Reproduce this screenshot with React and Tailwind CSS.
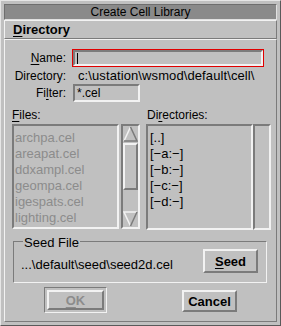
import React from "react";

// motif-ish bevels
const sunken = "border-2 border-t-[#7b7b7b] border-l-[#7b7b7b] border-b-[#f2f2f2] border-r-[#f2f2f2]";
const raised = "border-2 border-t-[#f2f2f2] border-l-[#f2f2f2] border-b-[#7b7b7b] border-r-[#7b7b7b]";
const etched = "border border-t-[#7b7b7b] border-l-[#7b7b7b] border-b-[#f2f2f2] border-r-[#f2f2f2]";

const files = ["archpa.cel", "areapat.cel", "ddxampl.cel", "geompa.cel", "igespats.cel", "lighting.cel"];
const dirs = ["[..]", "[\u2212a:\u2212]", "[\u2212b:\u2212]", "[\u2212c:\u2212]", "[\u2212d:\u2212]"];

function Mn({ children }) {
  return <span className="underline underline-offset-2 decoration-1">{children}</span>;
}

export default function App() {
  return (
    <div
      className="w-[281px] h-[326px] bg-[#c0c0c0] text-black text-[12px] leading-none p-[3px] border border-t-[#e6e6e6] border-l-[#e6e6e6] border-b-[#5a5a5a] border-r-[#5a5a5a] flex flex-col"
      style={{ fontFamily: '"Liberation Sans", Arial, sans-serif' }}
    >
      {/* title bar */}
      <div className="h-[16px] bg-[#8a8a8a] border border-t-[#6e6e6e] border-l-[#6e6e6e] border-b-[#e0e0e0] border-r-[#e0e0e0] flex items-center justify-center text-[12px]">
        Create Cell Library
      </div>

      {/* menu bar */}
      <div className={`h-[19px] ${raised} border-[1px] flex items-center pl-[8px] font-bold text-[13px]`}>
        <span><Mn>D</Mn>irectory</span>
      </div>

      {/* body */}
      <div className={`flex-1 ${raised} border-[1px] flex flex-col`}>
        {/* name */}
        <div className="flex items-center mt-[9px] h-[18px]">
          <div className="w-[61px] text-right"><Mn>N</Mn>ame:</div>
          <div className="ml-[6px] w-[192px] h-[18px] border border-[#e00000]">
            <div className={`h-full ${sunken} flex items-center pl-[2px]`}>
              <div className="w-[1px] h-[11px] bg-black"></div>
            </div>
          </div>
        </div>

        {/* directory */}
        <div className="flex items-center h-[17px]">
          <div className="w-[61px] text-right">Directory:</div>
          <div className="ml-[12px] text-[13px] tracking-[0.1px]">c:\ustation\wsmod\default\cell\</div>
        </div>

        {/* filter */}
        <div className="flex items-center h-[18px]">
          <div className="w-[61px] text-right">Fi<Mn>l</Mn>ter:</div>
          <div className={`ml-[7px] w-[67px] h-[18px] ${sunken} flex items-center pl-[2px]`}>*.cel</div>
        </div>

        {/* lists */}
        <div className="flex mt-[7px] ml-[7px]">
          <div className="flex flex-col">
            <div className="h-[15px]"><Mn>F</Mn>iles:</div>
            <div className="flex">
              <div className={`w-[107px] h-[105px] ${sunken} flex flex-col pl-[1px] pt-[3px] text-[#8c8c8c] text-[13px]`}>
                {files.map((f) => (
                  <div key={f} className="h-[16px] flex items-center">{f}</div>
                ))}
              </div>
              <div className={`ml-[2px] w-[19px] h-[105px] ${sunken} flex flex-col items-center`}>
                <svg width="15" height="16" viewBox="0 0 15 16">
                  <polygon points="7.5,1 1,15 14,15" fill="#c0c0c0" />
                  <polyline points="1,15 7.5,1" stroke="#f2f2f2" strokeWidth="1.5" fill="none" />
                  <polyline points="7.5,1 14,15 1,15" stroke="#7b7b7b" strokeWidth="1.5" fill="none" />
                </svg>
                <div className={`mt-[1px] w-[15px] h-[47px] ${raised}`}></div>
                <div className="flex-1"></div>
                <svg width="15" height="16" viewBox="0 0 15 16">
                  <polygon points="1,1 14,1 7.5,15" fill="#c0c0c0" />
                  <polyline points="7.5,15 1,1 14,1" stroke="#f2f2f2" strokeWidth="1.5" fill="none" />
                  <polyline points="14,1 7.5,15" stroke="#7b7b7b" strokeWidth="1.5" fill="none" />
                </svg>
              </div>
            </div>
          </div>

          <div className="flex flex-col ml-[6px]">
            <div className="h-[15px] pl-[1px]">Di<Mn>r</Mn>ectories:</div>
            <div className="flex">
              <div className={`w-[107px] h-[106px] ${sunken} flex flex-col pl-[2px] pt-[3px] text-[13px]`}>
                {dirs.map((d) => (
                  <div key={d} className="h-[16px] flex items-center">{d}</div>
                ))}
              </div>
              <div className={`w-[18px] h-[106px] ${sunken}`}></div>
            </div>
          </div>
        </div>

        {/* seed file group */}
        <div className={`relative mt-[11px] ml-[8px] w-[254px] h-[42px] ${etched}`}>
          <div className="absolute -top-[6px] left-[9px] bg-[#c0c0c0] px-[1px] text-[13px]">Seed File</div>
          <div className="flex items-center h-full pl-[7px] pr-[8px]">
            <div className="flex-1 mt-[4px] text-[13px]">...\default\seed\seed2d.cel</div>
            <button className={`w-[55px] h-[24px] ${raised} font-bold text-[13px] flex items-center justify-center mt-[-2px]`}>
              <span><Mn>S</Mn>eed</span>
            </button>
          </div>
        </div>

        {/* buttons */}
        <div className="flex items-start mt-[4px]">
          <div className={`ml-[39px] w-[63px] h-[26px] ${etched} p-[2px]`}>
            <button className={`w-full h-full ${raised} font-bold text-[13px] text-[#8c8c8c] flex items-center justify-center`}>
              <span><Mn>O</Mn>K</span>
            </button>
          </div>
          <button className={`ml-[75px] mt-[3px] w-[55px] h-[22px] ${raised} font-bold text-[13px] flex items-center justify-center`}>
            Cancel
          </button>
        </div>
      </div>
    </div>
  );
}
